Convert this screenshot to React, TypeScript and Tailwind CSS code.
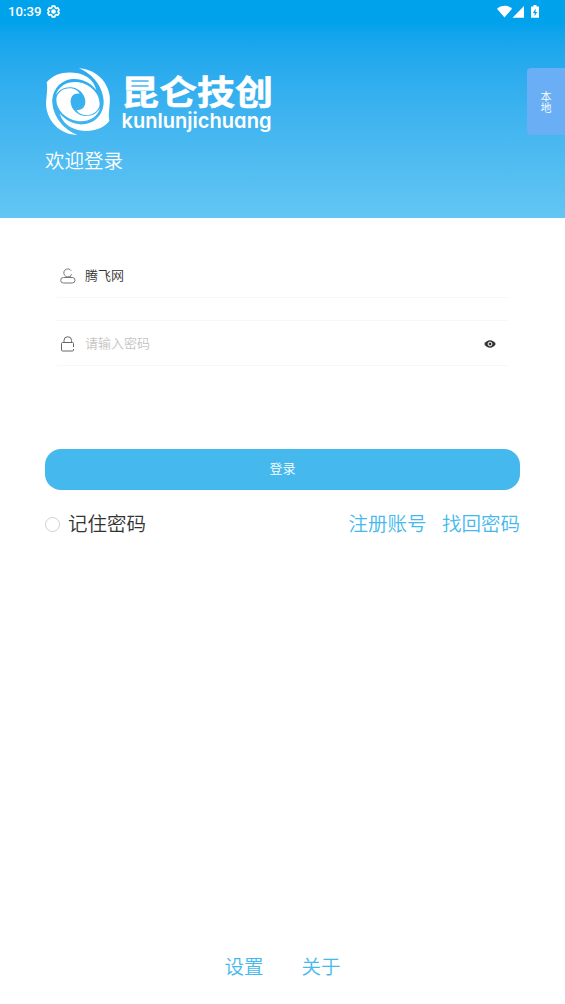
import React, { useState } from 'react';

const OUTER_BLADE = 'M20 64C42 36 80 30 114 37C144 44 162 62 169 87C152 65 126 52 98 54C60 57 36 88 37 124C39 166 70 206 112 222C64 220 26 186 19 140C16 112 25 90 20 64Z';
const INNER_BLADE = 'M47 103C56 73 86 60 116 64C152 70 179 98 179 128C179 150 156 165 134 162C121 160 113 154 109 146C124 150 137 139 136 121C135 98 114 79 90 79C70 79 56 88 47 103Z';

const SwirlMark: React.FC = () => (
  <svg viewBox="0 0 240 240" className="w-20 h-20 shrink-0" fill="#fff">
    <path d={OUTER_BLADE} />
    <path d={INNER_BLADE} />
    {/* Same pair of blades turned by half */}
    <g transform="rotate(180 114 122)">
      <path d={OUTER_BLADE} />
      <path d={INNER_BLADE} />
    </g>
  </svg>
);

const Logo: React.FC = () => (
  <div className="flex -ml-[5px]">
    <SwirlMark />
    <svg viewBox="0 0 160 80" className="w-40 h-20 shrink-0" fill="#fff">
      <text x="1" y="43.500" fontSize="34" fontWeight="700" stroke="#fff" strokeWidth=".5" textLength="152" lengthAdjust="spacingAndGlyphs" fontFamily='"Noto Sans CJK SC", sans-serif'>昆仑技创</text>
      <text x="1.500" y="66.500" fontSize="20.500" fontWeight="600" textLength="150" lengthAdjust="spacingAndGlyphs" fontFamily="Inter, sans-serif" className="[font-feature-settings:'cv11']">kunlunjichuang</text>
    </svg>
  </div>
);

const StatusBar: React.FC = () => (
  <div className="h-6 flex items-center justify-between pl-2 pr-[25px] pb-px text-white">
    <div className="flex items-center gap-[6px]">
      <span className="font-[Roboto] text-[13.2px] font-medium leading-[23px]">10:39</span>
      <svg viewBox="0 0 24 24" className="w-[13px] h-[13px]" fill="none" stroke="currentColor" strokeWidth="3" strokeLinejoin="round">
        <path d="M9.500 2h5l.7 3 2 1.200 3-1 2.300 4.200-2.300 2.100v1l2.300 2.100-2.300 4.200-3-1-2 1.200-.7 3h-5l-.7-3-2-1.200-3 1-2.300-4.200 2.300-2.100v-1L1.500 9.400l2.300-4.200 3 1 2-1.200z" />
        <circle cx="12" cy="12" r="2.800" fill="currentColor" />
      </svg>
    </div>
    <svg viewBox="0 0 43 14" className="w-[43px] h-[14px]" fill="currentColor">
      <path d="M0 3.800C4-.3 11-.3 15 3.800L7.500 12.500Z" />
      <path d="M27 1V12.700H15.500Z" />
      <path fillRule="evenodd" d="M36.500 0h3V1.500H42V12.700H34V1.500h2.500ZM38.600 3.500 36 8h1.600v3.300L40.200 7h-1.600Z" />
    </svg>
  </div>
);

const UserIcon: React.FC = () => (
  <svg viewBox="0 0 16 16" className="w-4 h-4" fill="none" stroke="#777" strokeWidth="1">
    <path d="M11.200 2.800A4 4 0 1 0 11.600 6.200" />
    <path d="M10 8.500l1.800 1.300" />
    <rect x=".7" y="9.500" width="14.300" height="5.500" rx="2.700" />
  </svg>
);

const LockIcon: React.FC = () => (
  <svg viewBox="0 0 16 16" className="w-4 h-4" fill="none" stroke="#666" strokeWidth="1">
    <path d="M4 6V4.500a3.800 3.800 0 0 1 7.600 0V6M13.500 11V7.500Q13.500 6.500 12.500 6.500H2.500Q1.500 6.500 1.500 7.500V14Q1.500 15 2.500 15H12.500Q13.500 15 13.500 14V13" />
  </svg>
);

const EyeIcon: React.FC = () => (
  <svg viewBox="0 0 12 10" className="w-3 h-[10px]">
    <path d="M.3 5C3 0 9 0 11.700 5 9 10 3 10 .3 5Z" fill="#333" />
    <circle cx="6" cy="5" r="1.900" fill="none" stroke="#fff" strokeWidth="1" />
  </svg>
);

const App: React.FC = () => {
  const [account, setAccount] = useState('腾飞网');
  const [password, setPassword] = useState('');
  const [visible, setVisible] = useState(false);
  const [remember, setRemember] = useState(false);

  return (
    <div className="relative flex flex-col h-[1004px] bg-white font-['Noto_Sans_CJK_SC',sans-serif] font-[350] text-[#333]">
      <header className="h-[218px] bg-linear-to-b from-[#00a2ec] from-10% to-[#62c6f3]">
        <StatusBar />
        <div className="pl-[45px] pt-[37px]">
          <Logo />
          <h1 className="text-[19.5px] leading-7 text-white mt-[5px]">欢迎登录</h1>
        </div>
      </header>

      {/* Network switch pinned to the screen edge */}
      <button className="absolute right-0 top-[68px] w-[38px] h-[67px] rounded-l-[4px] bg-[#6aaff5] text-white text-[11px] leading-[11px] flex items-center justify-center">
        <span className="w-[11px] break-all">本地</span>
      </button>

      <main className="px-[45px] pt-9">
        <div className="mx-3">
          <div className="h-11 flex items-center border-b border-[#f7f7f7] pl-[3px]">
            <UserIcon />
            <input
              value={account}
              onChange={(e) => setAccount(e.target.value)}
              className="flex-1 ml-[9px] pb-[2px] text-[13px] outline-none"
            />
          </div>
          <div className="mt-[22px] h-[46px] flex items-center border-y border-[#f7f7f7] pl-[3px] pr-3 pt-px">
            <LockIcon />
            <input
              type={visible ? 'text' : 'password'}
              value={password}
              onChange={(e) => setPassword(e.target.value)}
              placeholder="请输入密码"
              className="flex-1 ml-[9px] pb-[2px] text-[13px] outline-none placeholder:text-[#c4c4c4]"
            />
            <button onClick={() => setVisible(!visible)}>
              <EyeIcon />
            </button>
          </div>
        </div>

        <button className="block w-full h-[41px] mt-[83px] pb-[3px] rounded-[16px] bg-[#45b9ed] text-white text-[13px]">登录</button>

        <div className="flex items-center justify-between mt-[19px] text-[19.5px] leading-7">
          <button className="flex items-center gap-2" onClick={() => setRemember(!remember)}>
            <span className={`w-[15px] h-[15px] mt-[2px] rounded-full border border-[#d0d0d0] ${remember ? 'bg-[#45b9ed]' : 'bg-white'}`} />
            记住密码
          </button>
          <div className="flex gap-[15.5px] text-[#45b9ed]">
            <a href="#register">注册账号</a>
            <a href="#reset">找回密码</a>
          </div>
        </div>
      </main>

      <footer className="mt-auto mb-6 flex justify-center gap-[38px] text-[19.5px] leading-7 text-[#45b9ed]">
        <a href="#settings">设置</a>
        <a href="#about">关于</a>
      </footer>
    </div>
  );
};

export default App;
